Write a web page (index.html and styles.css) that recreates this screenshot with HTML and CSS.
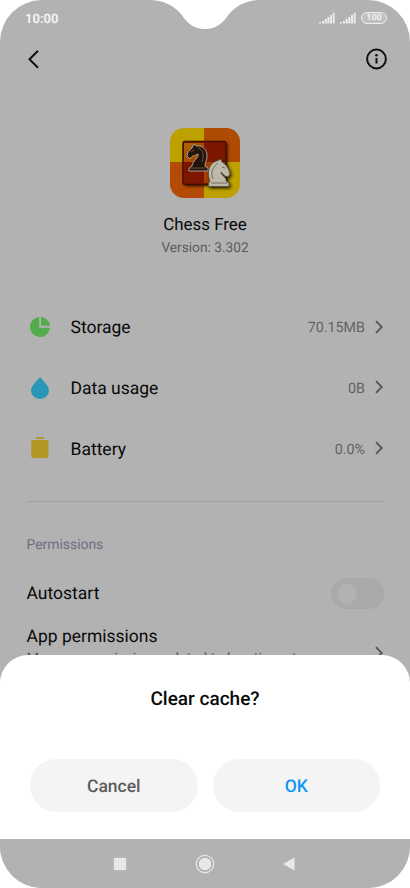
FILE: index.html
```html
<!DOCTYPE html>
<html lang="en">
<head>
<meta charset="utf-8">
<title>App info</title>
<link rel="stylesheet" href="styles.css">
</head>
<body>
<div class="phone">
  <svg class="notch" width="112" height="30" viewBox="0 0 112 30"><path d="M0 0C14 0 24 5 32 14C38 23 45 29 56 29C67 29 74 23 80 14C88 5 98 0 112 0Z" fill="#fff"/></svg>
  <header class="status">
    <span class="time">10:00</span>
    <div class="indicators">
      <svg class="signal" width="16" height="12" viewBox="0 0 16 12" fill="#eee"><path d="M0 11.5V10.5L2 9.7V11.5ZM3 11.5V9H5V11.5ZM5.7 11.5V7H7.7V11.5ZM8.4 11.5V5H10.4V11.5ZM11.1 11.5V3H13V11.5ZM13.8 11.5V.7H15.6V11.5Z"/></svg>
      <svg class="signal" width="16" height="12" viewBox="0 0 16 12" fill="#eee"><path d="M0 11.5V10.5L2 9.7V11.5ZM3 11.5V9H5V11.5ZM5.7 11.5V7H7.7V11.5ZM8.4 11.5V5H10.4V11.5ZM11.1 11.5V3H13V11.5ZM13.8 11.5V.7H15.6V11.5Z"/></svg>
      <span class="charge">100</span>
    </div>
  </header>
  <nav class="topbar">
    <svg width="14" height="22" viewBox="0 0 14 22"><path d="M12 2.800L3.500 11.300L12 19.800" fill="none" stroke="#111" stroke-width="2"/></svg>
    <svg width="22" height="22" viewBox="0 0 22 22"><circle cx="11.500" cy="11" r="9.400" fill="none" stroke="#111" stroke-width="2"/><circle cx="11.500" cy="7.300" r="1.300" fill="#111"/><path d="M11.500 10V15.500" stroke="#111" stroke-width="2"/></svg>
  </nav>
  <section class="app">
    <svg width="70" height="70" viewBox="0 0 70 70">
      <defs>
        <clipPath id="tile"><rect width="70" height="70" rx="14"/></clipPath>
        <filter id="shade" x="-30%" y="-30%" width="170%" height="170%"><feDropShadow dx="1.5" dy="1.5" stdDeviation="1.8" flood-color="#000" flood-opacity=".8"/></filter>
        <linearGradient id="amber" x2="1" y2="1"><stop stop-color="#aa6508"/><stop offset="1" stop-color="#a63b00"/></linearGradient>
      </defs>
      <g clip-path="url(#tile)">
        <path d="M0 0H34V34H0Z" fill="#bca100"/><path d="M34 0H70V34H34Z" fill="#ae4a02"/>
        <path d="M0 34H34V70H0Z" fill="#b34a05"/><path d="M34 34H70V70H34Z" fill="#bea000"/>
      </g>
      <rect x="13" y="13.5" width="43" height="43" rx="2" fill="#7b1700" filter="url(#shade)"/>
      <path d="M14 15H34V34H14Z" fill="url(#amber)"/><path d="M34 34H55V55H34Z" fill="#a63f00"/>
      <rect x="13" y="13.5" width="43" height="43" rx="2" fill="none" stroke="#421000" stroke-width="1.500"/>
      <path d="M22 38C23 32 29 30 28 26C25 28 22 27 20 31L17 28C17 24 20 22 22 20L24 16L26 18C33 17 37 22 37 28C37 33 35 34 35 38L38 40V43H19V40Z" fill="#22130d" stroke="#aaa18f" stroke-width="1"/>
      <path d="M21 24L24 22M28 20C34 22 34 27 32 34M20 40H36" fill="none" stroke="#70503b" stroke-width="1"/>
      <path d="M40 53C37 46 38 38 44 34L49 32L51 31L52 34C56 36 59 41 60 46L58 49L55 48L51 44C51 48 57 49 56 53L59 55V58.500H38.500V55Z" fill="#bdb8a8" stroke="#4c4638" stroke-width=".8" filter="url(#shade)"/>
      <path d="M43 51C40 44 43 39 48 35M52 39L55 40M41 55H57" fill="none" stroke="#766f60" stroke-width="1"/>
    </svg>
    <h1>Chess Free</h1>
    <p>Version: 3.302</p>
  </section>
  <section class="usage">
    <div class="row">
      <svg class="icon" width="20" height="22" viewBox="0 0 20 22"><path d="M9.200 1.050A10 10 0 1 0 19.950 11.800H9.200Z" fill="#53ab4b"/><path d="M11 1A9.500 9.500 0 0 1 20 9.800H11Z" fill="#53ab4b"/></svg>
      <span class="label">Storage</span><span class="value">70.15MB</span>
      <svg class="chevron" width="8" height="14" viewBox="0 0 8 14"><path d="M1 1.200L6.800 7L1 12.800"/></svg>
    </div>
    <div class="row">
      <svg class="icon" width="20" height="22" viewBox="0 0 20 22"><path d="M10 0C8 3 1 8.500 1 13.500A9 8.500 0 0 0 19 13.500C19 8.500 12 3 10 0Z" fill="#2996b8"/></svg>
      <span class="label">Data usage</span><span class="value">0B</span>
      <svg class="chevron" width="8" height="14" viewBox="0 0 8 14"><path d="M1 1.200L6.800 7L1 12.800"/></svg>
    </div>
    <div class="row">
      <svg class="icon" width="20" height="22" viewBox="0 0 20 22" fill="#b39623"><rect x="6.200" width="7.600" height="2" rx=".5"/><rect x="1.200" y="3" width="17.300" height="18" rx="2"/></svg>
      <span class="label">Battery</span><span class="value">0.0%</span>
      <svg class="chevron" width="8" height="14" viewBox="0 0 8 14"><path d="M1 1.200L6.800 7L1 12.800"/></svg>
    </div>
  </section>
  <section class="permissions">
    <h2>Permissions</h2>
    <div class="autostart"><span class="label">Autostart</span><span class="switch"></span></div>
    <div class="manage">
      <div><div class="label">App permissions</div><div class="detail">Manage permissions related to location, storage,</div></div>
      <svg class="chevron" width="8" height="14" viewBox="0 0 8 14"><path d="M1 1.200L6.800 7L1 12.800"/></svg>
    </div>
  </section>
  <div class="bottom">
    <div class="dialog" role="dialog">
      <h3>Clear cache?</h3>
      <div class="actions"><button>Cancel</button><button class="ok">OK</button></div>
    </div>
    <footer class="keys">
      <svg width="14" height="14" viewBox="0 0 14 14"><rect x=".9" y=".9" width="12.200" height="12.200" fill="#e8e8e8"/></svg>
      <svg width="20" height="20" viewBox="0 0 20 20"><circle cx="10" cy="10" r="8.700" fill="none" stroke="#e8e8e8" stroke-width="1.200"/><circle cx="10" cy="10" r="6.800" fill="#e8e8e8" stroke="#999" stroke-width=".6"/></svg>
      <svg width="14" height="14" viewBox="0 0 14 14"><path d="M1 7L12.500 .5V13.500Z" fill="#e8e8e8"/></svg>
    </footer>
  </div>
</div>
</body>
</html>
```
FILE: styles.css
```css
* { box-sizing: border-box; }
body { margin: 0; background: #fff; font-family: Roboto, sans-serif; color: #090909; text-rendering: geometricPrecision; }
h1, h2, h3, p { margin: 0; font-weight: 400; }
svg { display: block; flex: none; }
.phone { position: relative; width: 410px; height: 888px; overflow: hidden; border-radius: 42px; background: #b2b2b2; }
.notch { position: absolute; left: 149px; top: 0; }
.status { height: 37px; display: flex; align-items: center; justify-content: space-between; padding: 0 23px 0 25px; }
.time { padding-top: 2px; font-size: 13px; line-height: 16px; font-weight: 700; color: #f2f2f2; }
.indicators { display: flex; align-items: center; gap: 5px; padding-bottom: 1px; }
.charge { width: 26px; height: 12px; border: 1px solid #eee; border-radius: 6px; color: #f2f2f2; background: #c0c0c0; font-size: 9px; line-height: 11px; font-weight: 700; text-align: center; }
.topbar { height: 44px; display: flex; align-items: center; justify-content: space-between; padding: 0 23px 0 26px; }
.app { height: 216px; padding-top: 47px; display: flex; flex-direction: column; align-items: center; }
.app h1 { margin-top: 16px; font-size: 16.9px; line-height: 22px; }
.app p { margin-top: 4px; font-size: 13.7px; line-height: 16px; color: #5b5b5b; }
.usage { height: 205px; margin: 0 26px 0 27px; border-bottom: 1px solid #a2a2a2; }
.row { height: 60.7px; display: flex; align-items: center; }
.icon { margin: 0 20.5px 0 3px; position: relative; top: -.5px; }
.label { font-size: 17.5px; line-height: 22px; }
.row .label, .autostart .label { padding-top: 2px; }
.value { padding-top: 2px; margin-left: auto; margin-right: 11px; font-size: 14.3px; color: #626262; }
.chevron { fill: none; stroke: #555; stroke-width: 1.8; position: relative; top: -.7px; }
.row .chevron { left: -.7px; }
.permissions { padding: 33px 26px 0 26.5px; }
.permissions h2 { font-size: 13.9px; line-height: 20px; color: #6c6f83; }
.autostart { margin-top: 22px; height: 32px; display: flex; align-items: center; justify-content: space-between; }
.switch { width: 53px; height: 31px; padding: 5px; border-radius: 16px; background: #aaa; border: 1px solid #a7a7a7; }
.switch::before { content: ""; display: block; width: 20px; height: 20px; border-radius: 50%; background: #b2b2b2; }
.manage { margin-top: 17px; display: flex; align-items: center; justify-content: space-between; height: 58px; }
.manage .chevron { top: -2px; left: -.7px; }
.detail { margin-top: 2px; font-size: 14.3px; line-height: 18px; height: 35px; color: #555; white-space: nowrap; }
.bottom { position: absolute; left: 0; right: 0; bottom: 0; }
.dialog { height: 184px; padding: 32px 30px 0; border-radius: 28px 28px 0 0; background: #fff; }
.dialog h3 { font-size: 19px; line-height: 24px; font-weight: 500; text-align: center; }
.actions { display: flex; gap: 15px; margin-top: 48px; }
button { flex: 1; height: 53px; border: 0; border-radius: 27px; background: #f4f4f4; font: 500 17.5px Roboto, sans-serif; color: #5c5c5c; padding: 2px 0 0; text-rendering: inherit; }
button.ok { color: #0d94fa; }
.keys { height: 49px; display: flex; align-items: center; justify-content: space-between; padding: 0 114px 0 113px; background: #b2b2b2; }
```
